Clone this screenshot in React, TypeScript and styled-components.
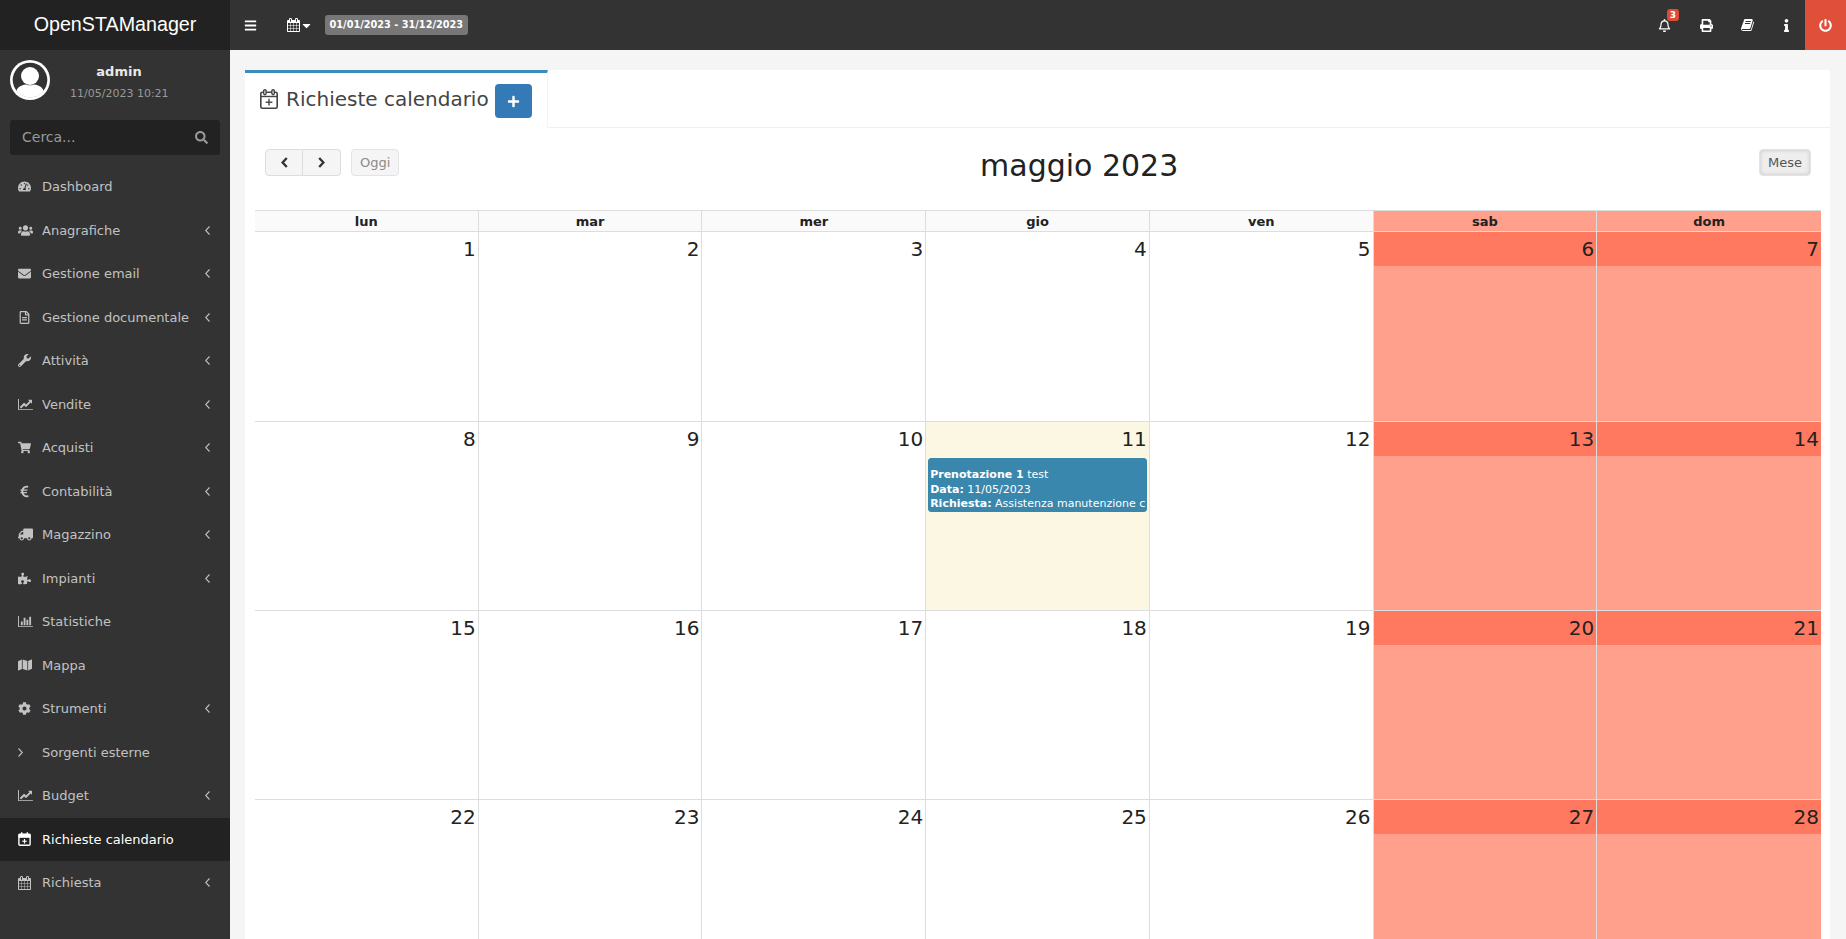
import React from 'react';
import styled, { createGlobalStyle } from 'styled-components';
import {
	FaBars,
	FaCaretDown,
	FaCog,
	FaEnvelope,
	FaEuroSign,
	FaInfo,
	FaMap,
	FaPlus,
	FaPowerOff,
	FaPrint,
	FaPuzzlePiece,
	FaRegBell,
	FaRegFileAlt,
	FaSearch,
	FaShoppingCart,
	FaTachometerAlt,
	FaTruck,
	FaUsers,
	FaWrench,
} from 'react-icons/fa';

const GlobalStyle = createGlobalStyle`
	html, body {
		margin: 0;
		height: 100%;
		overflow: hidden;
		background: #f5f5f5;
		font-family: "DejaVu Sans", sans-serif;
	}
	* { box-sizing: border-box; }
`;

const Page = styled.div`
	width: 100vw;
	height: 100vh;
	display: grid;
	grid-template-columns: 230px 1fr;
	grid-template-rows: 50px 1fr;
	overflow: hidden;
`;

const Logo = styled.div`
	background: #222;
	color: #fff;
	font: 19.7px/48px 'Liberation Sans', sans-serif;
	text-align: center;
`;

const Navbar = styled.header`
	background: #333;
	color: #fff;
	display: flex;
	align-items: center;
	padding-left: 14px;
`;

const NavIcon = styled.span`
	display: flex;
	align-items: center;
	font-size: 13px;
`;

const CalendarToggle = styled.span`
	display: flex;
	align-items: center;
	margin-left: 30px;
	margin-right: 12px;
	font-size: 13px;
`;

const DateLabel = styled.span`
	background: #777;
	border-radius: 3px;
	font-size: 9.75px;
	font-weight: 700;
	line-height: 20px;
	padding: 0 4.5px;
	white-space: nowrap;
`;

const NavRight = styled.div`
	margin-left: auto;
	display: flex;
	align-items: center;
	height: 100%;
`;

const NavAction = styled.span<{ $width: number }>`
	position: relative;
	width: ${(p) => p.$width}px;
	height: 100%;
	display: flex;
	align-items: center;
	justify-content: center;
	font-size: 13px;
`;

const Badge = styled.span`
	position: absolute;
	top: 9px;
	left: 23px;
	width: 12px;
	height: 12px;
	border-radius: 3px;
	background: #dd4b39;
	color: #fff;
	font-size: 9px;
	font-weight: 700;
	line-height: 12px;
	text-align: center;
`;

const PowerButton = styled.span`
	width: 41px;
	height: 100%;
	background: #e04f39;
	display: flex;
	align-items: center;
	justify-content: center;
	font-size: 13px;
`;

const Sidebar = styled.aside`
	background: #333;
	color: #b8c7ce;
	overflow: hidden;
`;

const UserPanel = styled.div`
	display: flex;
	align-items: flex-start;
	padding: 10px 10px 0;
	height: 60px;
`;

const UserInfo = styled.div`
	width: 98px;
	margin: 2px 0 0 20px;
	text-align: center;
	white-space: nowrap;
`;

const UserName = styled.div`
	color: #e8e8e8;
	font-size: 13px;
	font-weight: 700;
	line-height: 19px;
`;

const UserDate = styled.div`
	color: #999;
	font-size: 11px;
	line-height: 15px;
	margin-top: 5px;
`;

const SearchBox = styled.div`
	margin: 10px 10px 10px;
	height: 35px;
	background: #222;
	border-radius: 3px;
	display: flex;
	align-items: center;
	justify-content: space-between;
	padding: 0 12px;
	color: #999;
	font-size: 14px;
`;

const SearchPlaceholder = styled.span`
	margin-top: -2px;
`;

const Menu = styled.ul`
	list-style: none;
	margin: 0;
	padding: 0;
`;

const MenuItem = styled.li<{ $active?: boolean }>`
	height: 43.5px;
	display: flex;
	align-items: center;
	padding: 0 20px 0 18px;
	font-size: 13px;
	color: ${(p) => (p.$active ? '#fff' : '#c2c2c2')};
	background: ${(p) => (p.$active ? '#222' : 'transparent')};
`;

const MenuIcon = styled.span`
	width: 24px;
	flex: none;
	display: flex;
	align-items: center;
	font-size: 13px;
`;

const MenuArrow = styled.span`
	margin-left: auto;
	display: flex;
`;

const Content = styled.main`
	padding: 20px 16px 0 15px;
	overflow: hidden;
`;

const Card = styled.section`
	background: #fff;
	border-radius: 3px;
	height: 1100px;
`;

const Tabs = styled.div`
	height: 58px;
	border-bottom: 1px solid #f0f0f0;
	display: flex;
`;

const ActiveTab = styled.div`
	width: 303px;
	height: 58px;
	border-top: 3px solid #3c8dbc;
	border-right: 1px solid #f4f4f4;
	background: #fff;
	padding: 11px 0 0 15px;
	display: flex;
	align-items: flex-start;
	color: #444;
`;

const TabTitle = styled.span`
	display: flex;
	align-items: center;
	gap: 8px;
	font-size: 20px;
	line-height: 30px;
	white-space: nowrap;
`;

const AddButton = styled.span`
	width: 37px;
	height: 34px;
	margin-left: 6px;
	background: #337ab7;
	border-radius: 4px;
	color: #fff;
	display: flex;
	align-items: center;
	justify-content: center;
	font-size: 13px;
`;

const CalendarWrap = styled.div`
	padding: 21px 9px 0 10px;
`;

const Toolbar = styled.div`
	display: flex;
	justify-content: space-between;
	align-items: flex-start;
	padding: 0 10px;
	height: 61px;
`;

const ToolbarLeft = styled.div`
	display: flex;
	gap: 10px;
`;

const ButtonGroup = styled.div`
	display: flex;
`;

const FcButton = styled.span<{ $pressed?: boolean; $dim?: boolean }>`
	height: 27px;
	display: flex;
	align-items: center;
	justify-content: center;
	padding: 0 8px;
	background: ${(p) => (p.$pressed ? '#eee' : '#f5f5f5')};
	border: 1px solid #e3e3e3;
	border-radius: 4px;
	font-size: 13px;
	color: ${(p) => (p.$dim ? '#8a8a8a' : '#555')};
	box-shadow: ${(p) => (p.$pressed ? 'inset 0 0 4px rgba(0,0,0,.18)' : 'none')};
`;

const ArrowButton = styled(FcButton)<{ $side: 'left' | 'right' }>`
	width: 38px;
	color: #333;
	border-color: #ddd;
	border-radius: ${(p) => (p.$side === 'left' ? '4px 0 0 4px' : '0 4px 4px 0')};
	${(p) => p.$side === 'right' && 'border-left: 0;'}
`;

const MonthTitle = styled.h2`
	margin: -1px 0 0;
	font-size: 30px;
	font-weight: 400;
	line-height: 36px;
	color: #222;
`;

const WeekHeader = styled.div`
	display: grid;
	grid-template-columns: repeat(7, 1fr);
	border-top: 1px solid #ddd;
	border-bottom: 1px solid #ddd;
`;

const WeekDay = styled.div<{ $weekend?: boolean }>`
	height: 20px;
	line-height: 22px;
	text-align: center;
	font-size: 13px;
	font-weight: 700;
	color: #222;
	background: ${(p) => (p.$weekend ? '#ffa08d' : '#fafafa')};
	border-right: 1px solid #ddd;
	&:last-child { border-right: 0; }
`;

const WeekGrid = styled.div`
	display: grid;
	grid-template-rows: 190px 189px 189px 189px;
`;

const WeekRow = styled.div`
	display: grid;
	grid-template-columns: repeat(7, 1fr);
	border-bottom: 1px solid #ddd;
`;

const DayCell = styled.div<{ $weekend?: boolean; $today?: boolean }>`
	background: ${(p) => (p.$weekend ? '#ffa08d' : p.$today ? '#fcf7e3' : '#fff')};
	border-right: 1px solid #ddd;
	&:last-child { border-right: 0; }
	min-width: 0;
`;

const DayNumber = styled.div<{ $weekend?: boolean }>`
	height: 34px;
	padding: 2px 2px 0 0;
	text-align: right;
	font-size: 20px;
	line-height: 30px;
	color: #222;
	background: ${(p) => (p.$weekend ? '#ff7961' : 'transparent')};
`;

const EventCard = styled.div`
	margin: 2px 2px 0 2px;
	height: 54px;
	background: #3a87ad;
	border-radius: 3px;
	border: 1px solid #3a87ad;
	padding: 9px 1px 0;
	color: #fff;
	font-size: 11px;
	line-height: 14.5px;
	white-space: nowrap;
	overflow: hidden;
`;

const BookIcon = () => (
	<svg width="14" height="14" viewBox="0 0 1792 1792" fill="currentColor">
		<path d="M1639 478q40 57 18 129l-275 906q-19 64-76.5 107.5t-122.5 43.5h-923q-77 0-148.5-53.5t-99.5-131.5q-24-67-2-127 0-4 3-27t4-37q1-8-3-21.5t-3-19.5q2-11 8-21t16.5-23.5 16.5-23.5q23-38 45-91.5t30-91.5q3-10 .5-30t-.5-28q3-11 17-28t17-23q21-36 42-92t25-90q1-9-2.5-32t.5-28q4-13 22-30.5t22-22.5q19-26 42.5-84.5t27.5-96.5q1-8-3-25.5t-2-26.5q2-8 9-18t18-23 17-21q8-12 16.5-30.5t15-35 16-36 19.5-32 26.5-23.5 36-11.5 47.5 5.5l-1 3q38-9 51-9h761q74 0 114 56t18 130l-274 906q-36 119-71.5 153.5t-128.5 34.5h-869q-27 0-38 15-11 16-1 43 24 70 144 70h923q29 0 56-15.5t35-41.5l300-987q7-22 5-57 38 15 59 43zm-1064 2q-4 13 2 22.5t20 9.5h608q13 0 25.5-9.5t16.5-22.5l21-64q4-13-2-22.5t-20-9.5h-608q-13 0-25.5 9.5t-16.5 22.5zm-83 256q-4 13 2 22.5t20 9.5h608q13 0 25.5-9.5t16.5-22.5l21-64q4-13-2-22.5t-20-9.5h-608q-13 0-25.5 9.5t-16.5 22.5z" />
	</svg>
);

const CalendarIcon = () => (
	<svg width="13" height="14" viewBox="0 0 1664 1792" fill="currentColor">
		<path d="M128 1664h288v-288h-288v288zm352 0h320v-288h-320v288zm-352-352h288v-320h-288v320zm352 0h320v-320h-320v320zm-352-384h288v-288h-288v288zm736 736h320v-288h-320v288zm-384-736h320v-288h-320v288zm768 736h288v-288h-288v288zm-384-352h320v-320h-320v320zm-352-864v-288q0-13-9.5-22.5t-22.5-9.5h-64q-13 0-22.5 9.5t-9.5 22.5v288q0 13 9.5 22.5t22.5 9.5h64q13 0 22.5-9.5t9.5-22.5zm736 864h288v-320h-288v320zm-384-384h320v-288h-320v288zm384 0h288v-288h-288v288zm32-480v-288q0-13-9.5-22.5t-22.5-9.5h-64q-13 0-22.5 9.5t-9.5 22.5v288q0 13 9.5 22.5t22.5 9.5h64q13 0 22.5-9.5t9.5-22.5zm384-64v1280q0 52-38 90t-90 38h-1408q-52 0-90-38t-38-90v-1280q0-52 38-90t90-38h128v-96q0-66 47-113t113-47h64q66 0 113 47t47 113v96h384v-96q0-66 47-113t113-47h64q66 0 113 47t47 113v96h128q52 0 90 38t38 90z" />
	</svg>
);

const CalendarPlusIcon = () => (
	<svg width="18" height="20" viewBox="0 0 18 20" fill="none" stroke="currentColor">
		<rect x=".8" y="3.200" width="16.400" height="16" rx="1.500" strokeWidth="1.600" />
		<line x1="1" y1="7.500" x2="17" y2="7.500" strokeWidth="1.400" />
		<line x1="9" y1="9.800" x2="9" y2="16.600" strokeWidth="1.400" />
		<line x1="5.600" y1="13.200" x2="12.400" y2="13.200" strokeWidth="1.400" />
		<rect x="3.700" y=".7" width="2.400" height="5" rx="1.100" fill="#fff" strokeWidth="1.400" />
		<rect x="11.900" y=".7" width="2.400" height="5" rx="1.100" fill="#fff" strokeWidth="1.400" />
	</svg>
);

const ActiveCalendarIcon = () => (
	<svg width="13" height="14" viewBox="0 0 18 20" fill="none" stroke="currentColor">
		<rect x="1" y="3.200" width="16" height="15.800" rx="1.500" strokeWidth="2" />
		<rect x="1" y="3.200" width="16" height="4.500" fill="currentColor" strokeWidth="1" />
		<line x1="9" y1="10" x2="9" y2="16.400" strokeWidth="1.700" />
		<line x1="5.800" y1="13.200" x2="12.200" y2="13.200" strokeWidth="1.700" />
		<line x1="5" y1=".5" x2="5" y2="4" strokeWidth="2" />
		<line x1="13" y1=".5" x2="13" y2="4" strokeWidth="2" />
	</svg>
);

const LineChartIcon = () => (
	<svg width="15" height="13" viewBox="0 0 2048 1792" fill="currentColor">
		<path d="M2048 1536v128h-2048v-1536h128v1408h1920zm-128-1248v435q0 21-19.5 29.5t-35.5-7.5l-121-121-633 633q-10 10-23 10t-23-10l-233-233-416 416-192-192 585-585q10-10 23-10t23 10l233 233 464-464-121-121q-16-16-7.5-35.5t29.5-19.5h435q14 0 23 9t9 23z" />
	</svg>
);

const BarChartIcon = () => (
	<svg width="15" height="13" viewBox="0 0 2048 1792" fill="currentColor">
		<path d="M640 896v512h-256v-512h256zm384-512v1024h-256v-1024h256zm1024 1152v128h-2048v-1536h128v1408h1920zm-640-896v768h-256v-768h256zm384-384v1152h-256v-1152h256z" />
	</svg>
);

const Avatar = () => (
	<svg width="40" height="40" viewBox="0 0 40 40">
		<circle cx="20" cy="20" r="20" fill="#fff" />
		<circle cx="20" cy="20" r="17.300" fill="#333" />
		<circle cx="20" cy="16" r="9" fill="#fff" />
		<path d="M6.500 31c1-4 5-6 9-6.500 2 1 7 1 9 0 4 .5 8 2.500 9 6.500-3 4-8 6.500-13.500 6.500s-10.500-2.500-13.500-6.500z" fill="#fff" />
	</svg>
);

const ThinAngle = ({ dir }: { dir: 'left' | 'right' }) => (
	<svg width="5" height="9" viewBox="0 0 5 9" fill="none" stroke="currentColor" strokeWidth="1.100">
		<polyline points={dir === 'left' ? '4.500,.5 .7,4.500 4.500,8.500' : '.5,.5 4.300,4.500 .5,8.500'} />
	</svg>
);

const HeavyChevron = ({ dir }: { dir: 'left' | 'right' }) => (
	<svg width="7" height="11" viewBox="0 0 7 11" fill="none" stroke="currentColor" strokeWidth="2.300">
		<polyline points={dir === 'left' ? '5.800,1 1.600,5.500 5.800,10' : '1.200,1 5.400,5.500 1.200,10'} />
	</svg>
);

const TruckIcon = styled(FaTruck)`
	transform: scaleX(-1);
	font-size: 15px;
`;

const UsersIcon = styled(FaUsers)`
	font-size: 15px;
`;

const MapIcon = styled(FaMap)`
	font-size: 14px;
`;

const menu: { label: string; icon: React.ReactNode; arrow?: boolean; active?: boolean }[] = [
	{ label: 'Dashboard', icon: <FaTachometerAlt /> },
	{ label: 'Anagrafiche', icon: <UsersIcon />, arrow: true },
	{ label: 'Gestione email', icon: <FaEnvelope />, arrow: true },
	{ label: 'Gestione documentale', icon: <FaRegFileAlt />, arrow: true },
	{ label: 'Attività', icon: <FaWrench />, arrow: true },
	{ label: 'Vendite', icon: <LineChartIcon />, arrow: true },
	{ label: 'Acquisti', icon: <FaShoppingCart />, arrow: true },
	{ label: 'Contabilità', icon: <FaEuroSign />, arrow: true },
	{ label: 'Magazzino', icon: <TruckIcon />, arrow: true },
	{ label: 'Impianti', icon: <FaPuzzlePiece />, arrow: true },
	{ label: 'Statistiche', icon: <BarChartIcon /> },
	{ label: 'Mappa', icon: <MapIcon /> },
	{ label: 'Strumenti', icon: <FaCog />, arrow: true },
	{ label: 'Sorgenti esterne', icon: <ThinAngle dir="right" /> },
	{ label: 'Budget', icon: <LineChartIcon />, arrow: true },
	{ label: 'Richieste calendario', icon: <ActiveCalendarIcon />, active: true },
	{ label: 'Richiesta', icon: <CalendarIcon />, arrow: true },
];

const weekDays = ['lun', 'mar', 'mer', 'gio', 'ven', 'sab', 'dom'];
const weeks = [0, 1, 2, 3];

const App: React.FC = () => {
	return (
		<>
			<GlobalStyle />
			<Page>
				<Logo>OpenSTAManager</Logo>
				<Navbar>
					<NavIcon>
						<FaBars />
					</NavIcon>
					<CalendarToggle>
						<CalendarIcon />
						<FaCaretDown size={13} />
					</CalendarToggle>
					<DateLabel>01/01/2023 - 31/12/2023</DateLabel>
					<NavRight>
						<NavAction $width={40}>
							<FaRegBell />
							<Badge>3</Badge>
						</NavAction>
						<NavAction $width={45}>
							<FaPrint />
						</NavAction>
						<NavAction $width={38}>
							<BookIcon />
						</NavAction>
						<NavAction $width={38}>
							<FaInfo />
						</NavAction>
						<PowerButton>
							<FaPowerOff />
						</PowerButton>
					</NavRight>
				</Navbar>
				<Sidebar>
					<UserPanel>
						<Avatar />
						<UserInfo>
							<UserName>admin</UserName>
							<UserDate>11/05/2023 10:21</UserDate>
						</UserInfo>
					</UserPanel>
					<SearchBox>
						<SearchPlaceholder>Cerca...</SearchPlaceholder>
						<FaSearch size={13} />
					</SearchBox>
					<Menu>
						{menu.map((item) => (
							<MenuItem key={item.label} $active={item.active}>
								<MenuIcon>{item.icon}</MenuIcon>
								{item.label}
								{item.arrow && (
									<MenuArrow>
										<ThinAngle dir="left" />
									</MenuArrow>
								)}
							</MenuItem>
						))}
					</Menu>
				</Sidebar>
				<Content>
					<Card>
						<Tabs>
							<ActiveTab>
								<TabTitle>
									<CalendarPlusIcon />
									Richieste calendario
								</TabTitle>
								<AddButton>
									<FaPlus />
								</AddButton>
							</ActiveTab>
						</Tabs>
						<CalendarWrap>
							<Toolbar>
								<ToolbarLeft>
									<ButtonGroup>
										<ArrowButton $side="left">
											<HeavyChevron dir="left" />
										</ArrowButton>
										<ArrowButton $side="right">
											<HeavyChevron dir="right" />
										</ArrowButton>
									</ButtonGroup>
									<FcButton $dim>Oggi</FcButton>
								</ToolbarLeft>
								<MonthTitle>maggio 2023</MonthTitle>
								<FcButton $pressed>Mese</FcButton>
							</Toolbar>
							<WeekHeader>
								{weekDays.map((d, i) => (
									<WeekDay key={d} $weekend={i > 4}>
										{d}
									</WeekDay>
								))}
							</WeekHeader>
							<WeekGrid>
								{weeks.map((w) => (
									<WeekRow key={w}>
										{weekDays.map((d, i) => {
											const day = w * 7 + i + 1;
											return (
												<DayCell key={d} $weekend={i > 4} $today={day === 11}>
													<DayNumber $weekend={i > 4}>{day}</DayNumber>
													{day === 11 && (
														<EventCard>
															<b>Prenotazione 1</b> test
															<br />
															<b>Data:</b> 11/05/2023
															<br />
															<b>Richiesta:</b> Assistenza manutenzione cliente
														</EventCard>
													)}
												</DayCell>
											);
										})}
									</WeekRow>
								))}
							</WeekGrid>
						</CalendarWrap>
					</Card>
				</Content>
			</Page>
		</>
	);
};

export default App;
